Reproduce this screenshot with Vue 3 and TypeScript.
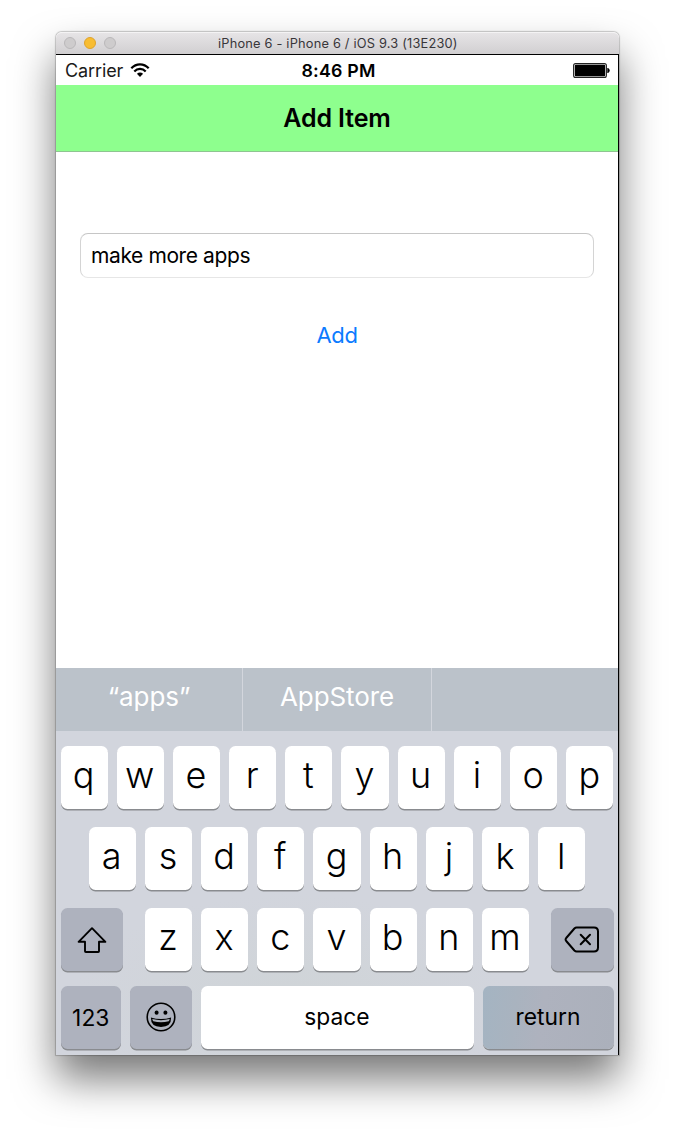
<script setup lang="ts">
import { ref } from 'vue'

const item = ref<string>('make more apps')
const suggestions: string[] = ['“apps”', 'AppStore', '']
const topRow: string[] = [...'qwertyuiop']
const homeRow: string[] = [...'asdfghjkl']
const bottomRow: string[] = [...'zxcvbnm']
</script>

<template>
  <main class="desktop">
    <section class="window">
      <header class="titlebar">
        <i class="light"></i>
        <i class="light minimize"></i>
        <i class="light"></i>
        <span class="window-title">iPhone 6 - iPhone 6 / iOS 9.3 (13E230)</span>
      </header>

      <div class="device">
        <div class="status">
          <div class="carrier">
            <span>Carrier</span>
            <svg width="20" height="15" viewBox="0 0 20 15">
              <g fill="none" stroke="#000" stroke-width="2.2">
                <path d="M1.3 5.2C6.2 0 13.8 0 18.7 5.2" />
                <path d="M4.3 8.4C7.5 5.1 12.5 5.1 15.7 8.4" />
              </g>
              <path d="M6.9 10.8Q10 8.1 13.1 10.8L10 13.9Z" />
            </svg>
          </div>
          <span class="time">8:46 PM</span>
          <svg class="battery" width="37" height="15" viewBox="0 0 37 15">
            <rect x=".6" y=".6" width="32.8" height="13.8" rx="2" fill="#fff" stroke="#222" stroke-width="1.1" />
            <rect x="1.8" y="1.8" width="30.4" height="11.4" rx="1" />
            <path d="M34.3 5h.7q1.7 .7 1.7 2.5t-1.7 2.5h-.7z" />
          </svg>
        </div>

        <h1 class="navbar"><span>Add Item</span></h1>

        <div class="content">
          <input v-model="item" class="field" type="text" />
          <button class="add"><span>Add</span></button>
        </div>

        <div class="suggestions">
          <div v-for="(word, i) in suggestions" :key="i" class="suggestion">{{ word }}</div>
        </div>

        <div class="keyboard">
          <div class="row">
            <button v-for="k in topRow" :key="k" class="key letter">{{ k }}</button>
          </div>
          <div class="row centered">
            <button v-for="k in homeRow" :key="k" class="key letter">{{ k }}</button>
          </div>
          <div class="row spread">
            <button class="key dark shift" aria-label="shift">
              <svg width="32" height="28" viewBox="0 0 32 28">
                <path d="M16 2.2 29.4 15.8H23V25.2Q23 26 22.2 26H9.8Q9 26 9 25.2V15.8H2.6Z" fill="none" stroke="#000" stroke-width="1.9" stroke-linejoin="round" />
              </svg>
            </button>
            <div class="letters">
              <button v-for="k in bottomRow" :key="k" class="key letter">{{ k }}</button>
            </div>
            <button class="key dark erase" aria-label="delete">
              <svg width="36" height="27" viewBox="0 0 36 27">
                <g fill="none" stroke="#000" stroke-width="2" stroke-linejoin="round" stroke-linecap="round">
                  <path d="M12.6 1.5H30Q34 1.5 34 5.5V21.5Q34 25.5 30 25.5H12.6Q11.4 25.5 10.4 24.5L2.2 15Q1 13.5 2.2 12L10.4 2.5Q11.4 1.5 12.6 1.5Z" />
                  <path d="M16.7 8.8 26 18.2M26 8.8 16.7 18.2" />
                </g>
              </svg>
            </button>
          </div>
          <div class="row">
            <button class="key dark numbers"><span>123</span></button>
            <button class="key dark emoji" aria-label="emoji">
              <svg width="30" height="30" viewBox="0 0 30 30">
                <circle cx="15" cy="15" r="13.8" fill="none" stroke="#000" stroke-width="1.6" />
                <ellipse cx="10.6" cy="10.7" rx="2" ry="2.1" />
                <ellipse cx="19.4" cy="10.7" rx="2" ry="2.1" />
                <path d="M4.9 15.4Q15 18.4 25.1 15.4Q25.4 24.8 15 24.9Q4.6 24.8 4.9 15.4Z" />
                <path d="M6.3 17Q15 19.3 23.7 17Q23.5 18.4 22.7 19.3Q15 21.4 7.3 19.3Q6.5 18.4 6.3 17Z" fill="#adb2bd" />
              </svg>
            </button>
            <button class="key space"><span>space</span></button>
            <button class="key dark return"><span>return</span></button>
          </div>
        </div>
      </div>
    </section>
  </main>
</template>

<style>
body {
  margin: 0;
  background: #fff;
}
</style>

<style scoped>
.desktop {
  box-sizing: border-box;
  width: 675px;
  height: 1135px;
  padding: 32px 56px 0 56px;
  overflow: hidden;
  background: #fff;
  font-family: Inter, "Liberation Sans", sans-serif;
  color: #000;
}
button,
input {
  font-family: inherit;
  color: inherit;
  margin: 0;
  border: 0;
  padding: 0;
  outline: none;
}
svg {
  display: block;
}
.window {
  width: 563px;
  height: 1023px;
  border-radius: 6px 6px 0 0;
  box-shadow: 0 24px 42px rgba(0, 0, 0, 0.53), 0 0 1px 0.5px rgba(0, 0, 0, 0.2);
}
.titlebar {
  box-sizing: border-box;
  display: flex;
  align-items: center;
  gap: 8px;
  height: 22px;
  padding-left: 8px;
  border-radius: 6px 6px 0 0;
  border-top: 1px solid #f4f3f4;
  background: linear-gradient(#e6e4e6, #d1cfd1);
}
.light {
  box-sizing: border-box;
  width: 12px;
  height: 12px;
  margin-top: -1px;
  border-radius: 50%;
  border: 1px solid #bab8ba;
  background: #cecccd;
}
.light.minimize {
  border-color: #dfa32c;
  background: #f8bd32;
}
.window-title {
  margin-left: 94px;
  font-size: 12.8px;
  letter-spacing: 0.2px;
  line-height: 20px;
  white-space: nowrap;
  color: #38363a;
}
.device {
  box-sizing: border-box;
  display: flex;
  flex-direction: column;
  height: 1001px;
  border-top: 1px solid #000;
  border-right: 1px solid #000;
  background: #fff;
}
.status {
  display: grid;
  grid-template-columns: 1fr auto 1fr;
  align-items: center;
  height: 30px;
  padding: 0 8px 0 9px;
  font-size: 18px;
}
.carrier {
  display: flex;
  align-items: center;
  gap: 7px;
  letter-spacing: -0.12px;
  color: #1a1a1a;
}
.time {
  padding-left: 2px;
  font-weight: 600;
  font-size: 17.8px;
  letter-spacing: 0.2px;
}
.battery {
  justify-self: end;
}
.navbar {
  box-sizing: border-box;
  display: flex;
  align-items: center;
  justify-content: center;
  height: 67px;
  margin: 0;
  border-bottom: 1px solid #8fc491;
  background: #8eff8e;
  font-size: 25px;
  font-weight: 600;
  letter-spacing: -0.15px;
}
.content {
  display: flex;
  flex-direction: column;
  align-items: center;
  height: 516px;
}
.field {
  box-sizing: border-box;
  width: 514px;
  height: 45px;
  margin: 81px 0 0;
  padding: 0 10px;
  border: 1px solid #d4d4d4;
  border-top-color: #c6c6c6;
  border-bottom-color: #e6e6e6;
  border-radius: 8px;
  background: #fff;
  font-size: 21px;
  letter-spacing: -0.4px;
}
.add {
  margin-top: 41px;
  height: 32px;
  background: none;
  color: #0b7bff;
  font-size: 22px;
  letter-spacing: -0.4px;
}
.suggestions {
  display: grid;
  grid-template-columns: 187px 189px 1fr;
  height: 63px;
  background: #bbc2ca;
}
.suggestion {
  box-sizing: border-box;
  border-right: 1px solid #d3d6dd;
  text-align: center;
  line-height: 58px;
  font-size: 26px;
  letter-spacing: -0.1px;
  color: #fff;
}
.suggestion:last-child {
  border-right: 0;
}
.keyboard {
  box-sizing: border-box;
  height: 324px;
  padding: 15px 4.5px 0 4.5px;
  background: radial-gradient(ellipse 220px 110px at 42% 84%, #cfd4d7, rgba(207, 212, 215, 0)), #d2d5dd;
}
.row,
.letters {
  display: flex;
  gap: 9px;
}
.row {
  height: 63px;
  margin-bottom: 18px;
}
.row.centered {
  justify-content: center;
}
.row.spread {
  justify-content: space-between;
  margin-bottom: 15px;
}
.key {
  display: flex;
  flex: none;
  align-items: center;
  justify-content: center;
  height: 63px;
  border-radius: 6.5px;
  background: #fff;
  box-shadow: 0 1.5px 0 #898b8f;
  font-size: 22.8px;
}
.key > span {
  padding-bottom: 2px;
}
.letter {
  box-sizing: border-box;
  width: 47.2px;
  padding-right: 1px;
  padding-bottom: 6px;
  font-size: 36px;
  font-weight: 300;
}
.dark {
  background: #aeb2be;
}
.shift,
.erase {
  width: 62.5px;
}
.numbers {
  width: 60.5px;
}
.numbers > span {
  padding-bottom: 0;
}
.emoji {
  width: 61.5px;
}
.emoji svg {
  margin-bottom: 1px;
}
.space {
  width: 273px;
}
.return {
  width: 131px;
  background: linear-gradient(97deg, #a4b4c2, #a9b3bf 25%, #aeb2be 45%, #abb0bb);
}
</style>
